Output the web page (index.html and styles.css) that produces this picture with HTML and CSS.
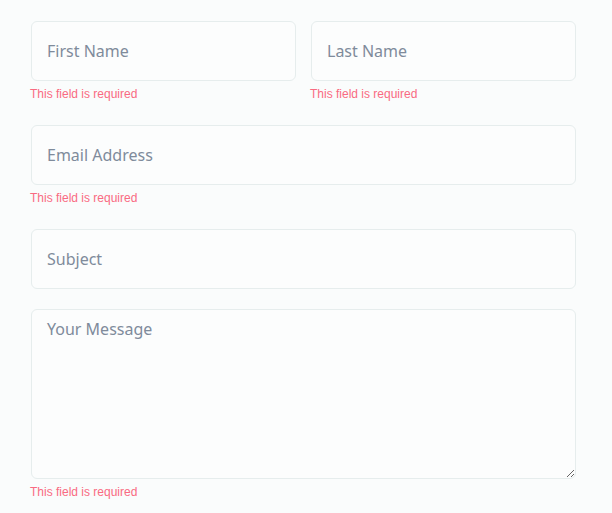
FILE: index.html
```html
<!DOCTYPE html>
<html lang="en">
<head>
<meta charset="utf-8">
<title>Contact form</title>
<link rel="stylesheet" href="styles.css">
</head>
<body>
<form class="form">
  <div class="row">
    <div class="group">
      <input class="field" type="text" placeholder="First Name">
      <div class="error">This field is required</div>
    </div>
    <div class="group">
      <input class="field" type="text" placeholder="Last Name">
      <div class="error">This field is required</div>
    </div>
  </div>
  <div class="group">
    <input class="field" type="email" placeholder="Email Address">
    <div class="error">This field is required</div>
  </div>
  <div class="group">
    <input class="field" type="text" placeholder="Subject">
  </div>
  <div class="group">
    <textarea class="field area" placeholder="Your Message"></textarea>
    <div class="error">This field is required</div>
  </div>
</form>
</body>
</html>
```

FILE: styles.css
```css
html, body {
  margin: 0;
  background: #fafcfc;
}
body {
  padding: 21px 36px 0 31px;
}
.form {
  width: 545px;
  display: flex;
  flex-direction: column;
  gap: 20px;
}
.row {
  display: flex;
  gap: 15px;
}
.row .group {
  flex: 1;
}
.group {
  display: flex;
  flex-direction: column;
}
.field {
  box-sizing: border-box;
  width: 100%;
  height: 60px;
  margin: 0;
  padding: 0 15px;
  border: 1px solid #e6eded;
  border-radius: 6px;
  background: #fcfdfd;
  font-family: "Noto Sans", "Open Sans", sans-serif;
  font-size: 16px;
  color: #33475b;
  outline: none;
}
.field::placeholder {
  color: #7f8b9b;
}
.area {
  height: 170px;
  padding: 8px 15px;
  resize: vertical;
  display: block;
}
.error {
  margin: 6px 0 4px -1px;
  font-family: "Liberation Sans", Arial, sans-serif;
  font-size: 12px;
  line-height: 14px;
  color: #f96b82;
}
```
